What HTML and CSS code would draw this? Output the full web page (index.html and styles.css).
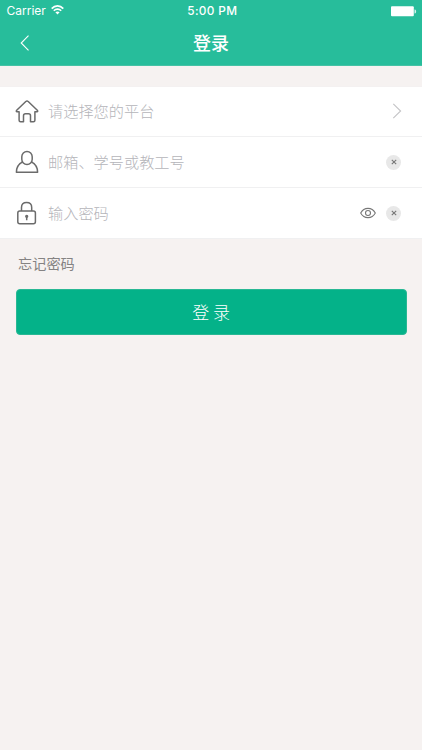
FILE: index.html
```
<!DOCTYPE html>
<html lang="zh-CN">
<head>
<meta charset="utf-8">
<title>登录</title>
<link rel="stylesheet" href="styles.css">
</head>
<body>
<header class="top">
  <div class="status">
    <div class="carrier"><span>Carrier</span>
      <svg class="wifi" width="13" height="10" viewBox="0 0 13 10" fill="none" stroke="#fff" stroke-width="1.6"><path d="M.7 3.6C4-.1 9-.1 12.3 3.6M2.8 5.8c2.100-2.200 5.300-2.200 7.400 0"/><path d="M4.400 7.300c1.200-1.200 3-1.200 4.200 0L6.500 9.500z" fill="#fff" stroke="none"/></svg>
    </div>
    <span class="time">5:00 PM</span>
    <svg class="battery" width="26" height="11" viewBox="0 0 26 11" fill="#fff"><rect x="0" y=".3" width="22.800" height="10" rx="1"/><path d="M23.500 3.400h.4q1.200 0 1.200 2t-1.200 2h-.4z" opacity=".8"/></svg>
  </div>
  <div class="nav">
    <svg class="back" width="10" height="16" viewBox="0 0 10 16" fill="none" stroke="#fff" stroke-width="1.100"><path d="M8.500.7 1.200 8l7.300 7.300"/></svg>
    <h1 class="title">登录</h1>
  </div>
</header>
<main>
  <div class="fields">
    <div class="row">
      <svg class="icon" width="24" height="26" viewBox="0 0 24 26"><path d="M4.100 13.700H2.200q-1.600-.3-.5-1.500l9.100-8.700q1.200-.9 2.400 0l9.100 8.700q1.100 1.200-.5 1.500h-1.900v8.600q0 1.500-1.500 1.500h-2.900v-6.100q0-2-2-2h-3q-2 0-2 2v6.100H5.600q-1.500 0-1.500-1.500z"/></svg>
      <span class="hint">请选择您的平台</span>
      <svg class="chevron" width="10" height="16" viewBox="0 0 10 16"><path d="M1.300.8 8.600 8l-7.300 7.200"/></svg>
    </div>
    <div class="row">
      <svg class="icon" width="24" height="26" viewBox="0 0 24 26"><rect x="6.800" y="2.500" width="10.400" height="13" rx="5.200"/><path d="M7.600 12.900c-3.900 1.900-6.100 5.100-6.200 10.300h21.200c-.1-5.200-2.300-8.400-6.200-10.300"/></svg>
      <span class="hint">邮箱、学号或教工号</span>
      <span class="clear"><svg width="6" height="6" viewBox="0 0 6 6"><path d="m.8.800 4.400 4.400M5.200.8.800 5.200"/></svg></span>
    </div>
    <div class="row">
      <svg class="icon" width="24" height="26" viewBox="0 0 24 26"><rect x="2.800" y="11" width="17.600" height="12.800" rx="2"/><path d="M6.500 11V7.400c0-2.900 2-4.900 5.100-4.900s5.100 2 5.100 4.900V11M11.700 17v3.200"/><circle cx="11.700" cy="16.300" r=".9"/></svg>
      <span class="hint">输入密码</span>
      <svg class="eye" width="16" height="12" viewBox="0 0 16 12"><path d="M.7 6C4-.2 12-.2 15.300 6 12 12.200 4 12.200.7 6z"/><circle cx="8" cy="6" r="2.500"/></svg>
      <span class="clear"><svg width="6" height="6" viewBox="0 0 6 6"><path d="m.8.800 4.400 4.400M5.200.8.800 5.200"/></svg></span>
    </div>
  </div>
  <a class="forgot">忘记密码</a>
  <button class="submit">登 录</button>
</main>
</body>
</html>
```
FILE: styles.css
```
* { box-sizing: border-box; }
body {
  margin: 0;
  min-height: 750px;
  background: #f6f2f1;
  font-family: Inter, "Noto Sans CJK SC", sans-serif;
}
.top { height: 66px; background: #27bd9b; color: #fff; border-bottom: 1px solid #45c2a5; }
.status {
  display: grid;
  grid-template-columns: 1fr auto 1fr;
  align-items: center;
  height: 22px;
  padding: 0 5px 0 6.500px;
  font-size: 12px;
  line-height: 22px;
}
.carrier { display: flex; align-items: center; gap: 5px; letter-spacing: 0; }
.wifi { margin-top: -2px; }
.time { padding-left: 1px; font-size: 11.800px; font-weight: 500; letter-spacing: .35px; }
.battery { justify-self: end; }
.nav {
  display: grid;
  grid-template-columns: 1fr auto 1fr;
  align-items: center;
  height: 42px;
  padding: 0 20px;
}
.title { margin: 2px 0 0; font-size: 18px; line-height: 40px; font-weight: 500; }
.back { margin-top: -1px; }
.fields { margin-top: 20px; background: #fff; border-top: 1px solid #f4f1f1; }
.row {
  display: flex;
  align-items: center;
  height: 51px;
  padding: 0 20px 0 15px;
  border-bottom: 1px solid #f0f0f1;
}
.row:first-child { height: 50px; }
.icon { margin-top: -1px; fill: none; stroke: #6b6b6b; stroke-width: 1.500; stroke-linejoin: round; }
.row:last-child .icon { margin-top: 0; }
.hint { flex: 1; margin-left: 9px; font-size: 15.200px; line-height: 22px; font-weight: 300; color: #b5b5ba; }
.row:not(:first-child) .hint { padding-top: 1px; }
.chevron { margin-top: -1px; fill: none; stroke: #c4c4c6; stroke-width: 1.100; }
.clear {
  display: flex;
  align-items: center;
  justify-content: center;
  width: 15px;
  height: 15px;
  margin-right: 1px;
  border-radius: 50%;
  background: #e8e8e8;
}
.clear svg { fill: none; stroke: #777; stroke-width: 1.100; }
.eye { margin-right: 10px; fill: none; stroke: #777; stroke-width: 1.100; }
.forgot { display: block; margin: 15px 18px 0; font-size: 14.200px; line-height: 20px; color: #858383; }
.submit {
  display: block;
  width: 391px;
  height: 46px;
  margin: 15px 0 0 15.600px;
  padding: 0;
  border: 1px solid #29b894;
  border-radius: 4px;
  background: #04b289;
  color: #fff;
  font: 300 17px/42px "Noto Sans CJK SC", sans-serif;
}
```
